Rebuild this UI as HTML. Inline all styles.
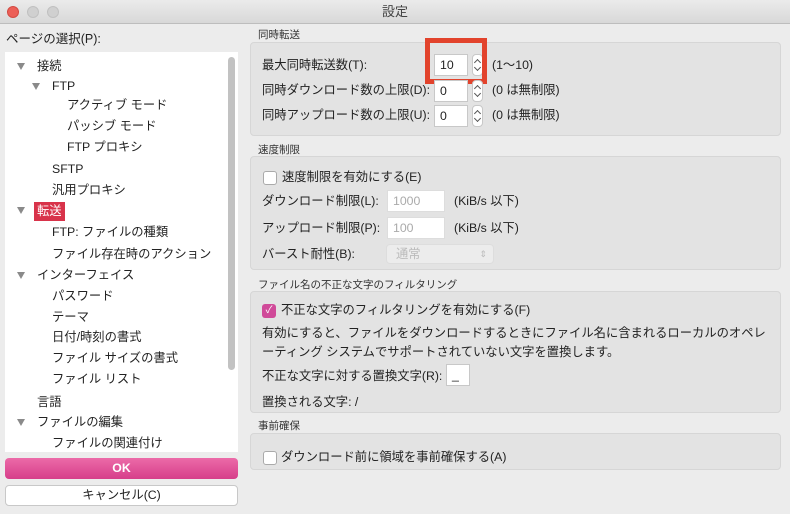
<!DOCTYPE html><html><head><meta charset="utf-8"><style>
*{margin:0;padding:0;box-sizing:border-box}
body{width:790px;height:514px;background:#ececec;font-family:"Liberation Sans","Noto Sans CJK JP",sans-serif;font-size:12.3px;line-height:17px;color:#222;position:relative;overflow:hidden}
.a{position:absolute;white-space:nowrap}
.title{left:0;top:0;width:790px;height:24px;background:linear-gradient(#ebebeb,#d8d8d8);border-bottom:1px solid #bdbdbd;text-align:center;line-height:24px;color:#444;font-size:13px}
.dot{position:absolute;top:6px;width:12px;height:12px;border-radius:50%;background:#d0d0d0;border:1px solid #c0c0c0}
.list{left:5px;top:52px;width:233px;height:400px;background:#fff;overflow:hidden}
.tri{width:0;height:0;border-left:4px solid transparent;border-right:4px solid transparent;border-top:7px solid #8a8a8a;margin-top:4px}
.box{position:absolute;left:250px;width:531px;background:#e3e3e3;border:1px solid #d6d6d6;border-radius:4px}
.glab{font-size:10.5px;color:#333}
.in{position:absolute;background:#fff;border:1px solid #c8c8c8;height:22px;line-height:20px;padding-left:5px}
.sp{position:absolute;width:11px;height:22px;border:1px solid #c8c8c8;border-radius:4px;background:#fff}
.sp:before,.sp:after{content:"";position:absolute;left:2px;width:4px;height:4px;border-left:1px solid #555;border-top:1px solid #555}
.sp:before{top:5px;transform:rotate(45deg)}
.sp:after{bottom:5px;transform:rotate(-135deg)}
.cb{position:absolute;width:14px;height:14px;background:#fff;border:1px solid #aaa;border-radius:3px}
</style></head><body>
<div class="a title">設定</div>
<div class="dot" style="left:7px;background:#ec5f57;border-color:#d24b43"></div>
<div class="dot" style="left:27px"></div>
<div class="dot" style="left:47px"></div>
<div class="a" style="left:6px;top:31px;font-size:12.5px">ページの選択(P):</div>
<div class="a list"></div>
<div class="a" style="left:228px;top:57px;width:7px;height:313px;background:#c2c2c2;border-radius:4px"></div>
<div class="a tri" style="left:17px;top:59px"></div><div class="a" style="left:37px;top:58px">接続</div>
<div class="a tri" style="left:32px;top:79px"></div><div class="a" style="left:52px;top:78px">FTP</div>
<div class="a" style="left:67px;top:97px">アクティブ モード</div>
<div class="a" style="left:67px;top:118px">パッシブ モード</div>
<div class="a" style="left:67px;top:139px">FTP プロキシ</div>
<div class="a" style="left:52px;top:161px">SFTP</div>
<div class="a" style="left:52px;top:182px">汎用プロキシ</div>
<div class="a tri" style="left:17px;top:203px"></div><div class="a" style="left:34px;top:202px;background:#d8334a;color:#fff;padding:1px 3px">転送</div>
<div class="a" style="left:52px;top:224px">FTP: ファイルの種類</div>
<div class="a" style="left:52px;top:246px">ファイル存在時のアクション</div>
<div class="a tri" style="left:17px;top:268px"></div><div class="a" style="left:37px;top:267px">インターフェイス</div>
<div class="a" style="left:52px;top:288px">パスワード</div>
<div class="a" style="left:52px;top:309px">テーマ</div>
<div class="a" style="left:52px;top:329px">日付/時刻の書式</div>
<div class="a" style="left:52px;top:350px">ファイル サイズの書式</div>
<div class="a" style="left:52px;top:371px">ファイル リスト</div>
<div class="a" style="left:37px;top:394px">言語</div>
<div class="a tri" style="left:17px;top:415px"></div><div class="a" style="left:37px;top:414px">ファイルの編集</div>
<div class="a" style="left:52px;top:435px">ファイルの関連付け</div>
<div class="a" style="left:5px;top:458px;width:233px;height:21px;border-radius:4px;background:linear-gradient(#ec6aa8,#d63f8a);color:#fff;text-align:center;line-height:21px;font-weight:bold">OK</div>
<div class="a" style="left:5px;top:485px;width:233px;height:21px;border-radius:4px;background:#fff;border:1px solid #c8c8c8;text-align:center;line-height:19px">キャンセル(C)</div>

<div class="a glab" style="left:258px;top:27px">同時転送</div>
<div class="box" style="top:42px;height:94px"></div>
<div class="a" style="left:262px;top:57px">最大同時転送数(T):</div>
<div class="in" style="left:434px;top:54px;width:34px">10</div><div class="sp" style="left:472px;top:54px"></div>
<div class="a" style="left:492px;top:57px">(1〜10)</div>
<div class="a" style="left:425px;top:38px;width:62px;height:46px;border:5px solid #e2432c"></div>
<div class="a" style="left:262px;top:82px">同時ダウンロード数の上限(D):</div>
<div class="in" style="left:434px;top:80px;width:34px">0</div><div class="sp" style="left:472px;top:80px"></div>
<div class="a" style="left:492px;top:82px">(0 は無制限)</div>
<div class="a" style="left:262px;top:107px">同時アップロード数の上限(U):</div>
<div class="in" style="left:434px;top:105px;width:34px">0</div><div class="sp" style="left:472px;top:105px"></div>
<div class="a" style="left:492px;top:107px">(0 は無制限)</div>

<div class="a glab" style="left:258px;top:142px">速度制限</div>
<div class="box" style="top:156px;height:114px"></div>
<div class="cb" style="left:263px;top:171px"></div><div class="a" style="left:282px;top:169px">速度制限を有効にする(E)</div>
<div class="a" style="left:262px;top:193px">ダウンロード制限(L):</div>
<div class="in" style="left:387px;top:190px;width:58px;color:#aaa;border-color:#ddd">1000</div>
<div class="a" style="left:454px;top:193px">(KiB/s 以下)</div>
<div class="a" style="left:262px;top:220px">アップロード制限(P):</div>
<div class="in" style="left:387px;top:217px;width:58px;color:#aaa;border-color:#ddd">100</div>
<div class="a" style="left:454px;top:220px">(KiB/s 以下)</div>
<div class="a" style="left:262px;top:246px">バースト耐性(B):</div>
<div class="a" style="left:386px;top:244px;width:108px;height:20px;border-radius:4px;background:#ececec;border:1px solid #ddd;color:#bbb;padding-left:9px;line-height:18px">通常<span style="position:absolute;right:6px;font-size:9px">⇕</span></div>

<div class="a glab" style="left:258px;top:277px">ファイル名の不正な文字のフィルタリング</div>
<div class="box" style="top:291px;height:122px"></div>
<div class="a" style="left:262px;top:304px;width:14px;height:14px;border-radius:3px;background:#d04a99;color:#fff;font-size:10px;text-align:center;line-height:14px">✓</div>
<div class="a" style="left:281px;top:302px">不正な文字のフィルタリングを有効にする(F)</div>
<div class="a" style="left:262px;top:325px">有効にすると、ファイルをダウンロードするときにファイル名に含まれるローカルのオペレ</div>
<div class="a" style="left:262px;top:344px">ーティング システムでサポートされていない文字を置換します。</div>
<div class="a" style="left:262px;top:368px">不正な文字に対する置換文字(R):</div>
<div class="in" style="left:446px;top:364px;width:24px;height:22px">_</div>
<div class="a" style="left:262px;top:394px">置換される文字: /</div>

<div class="a glab" style="left:258px;top:418px">事前確保</div>
<div class="box" style="top:433px;height:37px"></div>
<div class="cb" style="left:263px;top:451px"></div><div class="a" style="left:281px;top:449px">ダウンロード前に領域を事前確保する(A)</div>
</body></html>
